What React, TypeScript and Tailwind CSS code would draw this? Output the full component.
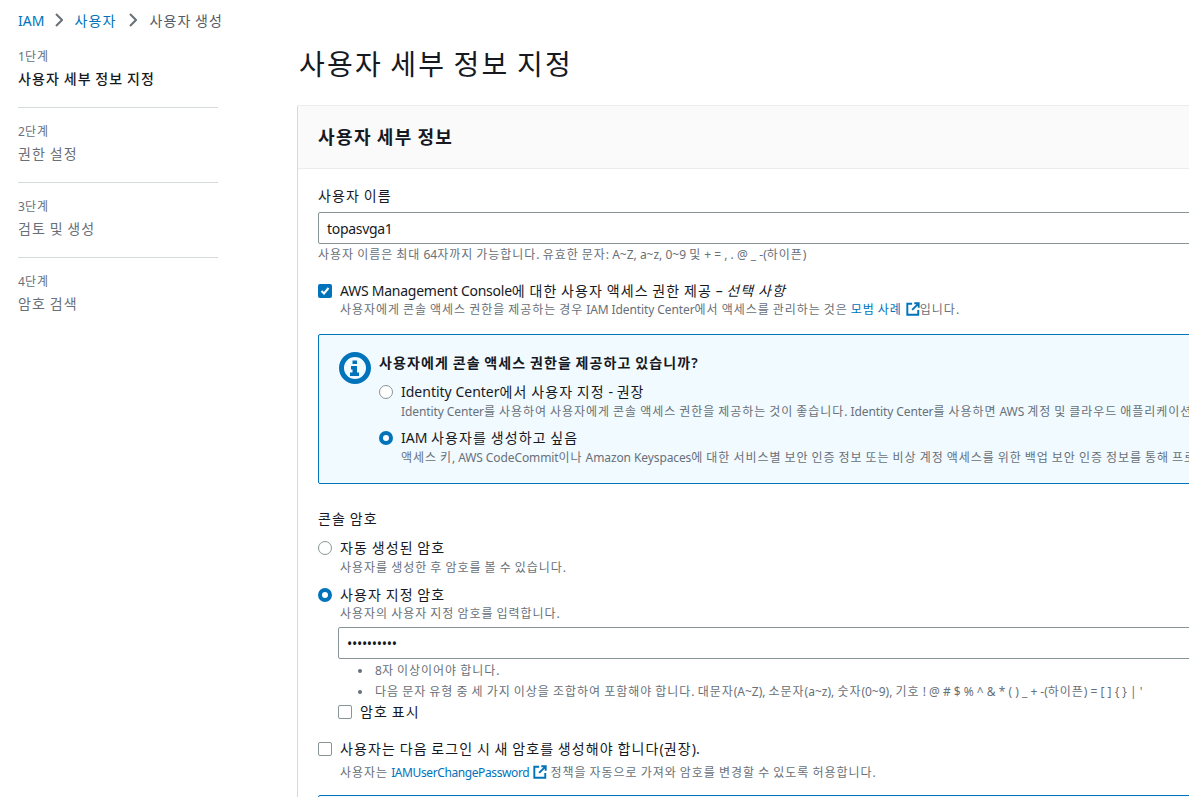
import React from 'react';

const STEPS = [
    { step: '1단계', label: '사용자 세부 정보 지정', active: true },
    { step: '2단계', label: '권한 설정', active: false },
    { step: '3단계', label: '검토 및 생성', active: false },
    { step: '4단계', label: '암호 검색', active: false },
];

const FONT = "font-['Noto_Sans','Noto_Sans_CJK_KR',sans-serif]";

// Hangul in the screenshot sets on a full em, wider than the installed CJK font
const K = ({ t }: { t: string }) => (
    <>
        {t.split(/([\uAC00-\uD7A3]+)/).map((part, i) =>
            i % 2 === 1 ? (
                <span key={i} className="tracking-[0.08em]">
                    {part}
                </span>
            ) : (
                part
            )
        )}
    </>
);

const Crumb = () => (
    <svg width="8" height="14" viewBox="0 0 8 14" fill="none" stroke="#687078" strokeWidth="2" className="mx-[11px] shrink-0">
        <path d="M1 1l6 6-6 6" />
    </svg>
);

const ExternalIcon = () => (
    <svg width="14" height="14" viewBox="0 0 16 16" fill="none" stroke="#0073bb" strokeWidth="2.2" className="inline-block align-[-2px] ml-[1px]">
        <path d="M7 2H1.5v12.5H14V9" />
        <path d="M9.5 1.5h5v5M14.5 1.5 7 9" />
    </svg>
);

const Radio = ({ checked }: { checked?: boolean }) =>
    checked ? (
        <span className="w-[14px] h-[14px] shrink-0 rounded-full bg-white border-[4px] border-[#0073bb]" />
    ) : (
        <span className="w-[14px] h-[14px] shrink-0 rounded-full bg-white border-[1.5px] border-[#879596]" />
    );

const Checkbox = ({ checked }: { checked?: boolean }) =>
    checked ? (
        <span className="w-[14px] h-[14px] shrink-0 rounded-[2px] bg-[#0073bb] flex items-center justify-center">
            <svg width="10" height="10" viewBox="0 0 10 10" fill="none" stroke="white" strokeWidth="2">
                <path d="M1.5 5 4 7.5 8.5 2" />
            </svg>
        </span>
    ) : (
        <span className="w-[14px] h-[14px] shrink-0 rounded-[2px] bg-white border border-[#879596]" />
    );

const InfoIcon = () => (
    <svg width="32" height="32" viewBox="0 0 32 32" className="shrink-0">
        <circle cx="16" cy="16" r="13.5" fill="none" stroke="#0073bb" strokeWidth="5" />
        <rect x="13.5" y="8.5" width="4.5" height="3.5" fill="#0073bb" />
        <path d="M12 14h6v6.5h2V24h-9v-3.5h2.5v-3H12z" fill="#0073bb" />
    </svg>
);

export default function App() {
    return (
        <div className={`w-[1189px] h-[797px] overflow-hidden bg-white text-[#16191f] ${FONT}`}>
            {/* Breadcrumb */}
            <nav className="h-[40px] pl-[18px] flex items-center text-[14px] text-[#545b64]">
                <span className="text-[#0073bb]">IAM</span>
                <Crumb />
                <span className="text-[#0073bb] mr-[2px]"><K t="사용자" /></span>
                <Crumb />
                <span className="ml-[1px]"><K t="사용자 생성" /></span>
            </nav>

            <div className="flex">
                {/* Steps */}
                <aside className="w-[200px] ml-[18px] shrink-0">
                    {STEPS.map((s, i) => (
                        <div
                            key={s.step}
                            className={`pb-[17px] ${i === 0 ? 'pt-[8px]' : 'pt-[15px]'} ${i < 3 ? 'border-b border-[#d5dbdb]' : ''}`}
                        >
                            <div className="text-[12px] leading-[18px] text-[#687078]"><K t={s.step} /></div>
                            <div className={`mt-[2px] text-[14px] leading-[22px] ${s.active ? 'text-[#16191f] font-medium' : 'text-[#687078]'}`}>
                                <K t={s.label} />
                            </div>
                        </div>
                    ))}
                </aside>

                {/* Main */}
                <main className="ml-[79px] w-[1000px] shrink-0">
                    <h1 className="text-[28px] leading-[48px] h-[65px] ml-[2px] font-normal"><K t="사용자 세부 정보 지정" /></h1>

                    <section className="border border-[#eaeded] border-l-[#d5dbdb] rounded-[2px]">
                        <header className="h-[63px] px-[20px] flex items-center bg-[#fafafa] border-b border-[#eaeded]">
                            <h2 className="text-[18px] font-semibold"><K t="사용자 세부 정보" /></h2>
                        </header>

                        <div className="px-[20px] pt-[16px]">
                            <div className="text-[14px] leading-[22px]"><K t="사용자 이름" /></div>
                            <div className="mt-[5px] h-[32px] px-[8px] flex items-center text-[14px] tracking-[-0.3px] border border-[#879596] rounded-[2px]">
                                topasvga1
                            </div>
                            <p className="mt-[2px] text-[12px] leading-[18px] text-[#687078]">
                                <K t="사용자 이름은 최대 64자까지 가능합니다. 유효한 문자: A~Z, a~z, 0~9 및 + = , . @ _ -(하이픈)" />
                            </p>

                            <div className="mt-[17px] flex items-center gap-[8px] text-[14px] leading-[20px]">
                                <Checkbox checked />
                                <span>
                                    <span className="tracking-[-0.25px]">AWS Management Console</span>
                                    <K t="에 대한 사용자 액세스 권한 제공 – " />
                                    <i><K t="선택 사항" /></i>
                                </span>
                            </div>
                            <p className="ml-[22px] text-[12px] leading-[18px] text-[#687078] tracking-[-0.1px]">
                                <K t="사용자에게 콘솔 액세스 권한을 제공하는 경우 IAM Identity Center에서 액세스를 관리하는 것은 " />
                                <span className="text-[#0073bb]"><K t="모범 사례" /></span> <ExternalIcon /><K t="입니다." />
                            </p>

                            {/* Info box */}
                            <div className="mt-[15px] h-[150px] pl-[20px] pt-[17px] flex gap-[8px] bg-[#f1faff] border border-[#0073bb] rounded-[2px] overflow-hidden">
                                <InfoIcon />
                                <div className="min-w-0 whitespace-nowrap">
                                    <div className="text-[14px] leading-[22px] font-semibold"><K t="사용자에게 콘솔 액세스 권한을 제공하고 있습니까?" /></div>
                                    <div className="mt-[8px] flex items-center gap-[8px] text-[14px] leading-[20px]">
                                        <Radio />
                                        <span><K t="Identity Center에서 사용자 지정 - 권장" /></span>
                                    </div>
                                    <p className="ml-[22px] mt-[1px] text-[12px] leading-[18px] text-[#687078] tracking-[-0.1px]">
                                        <K t="Identity Center를 사용하여 사용자에게 콘솔 액세스 권한을 제공하는 것이 좋습니다. Identity Center를 사용하면 AWS 계정 및 클라우드 애플리케이션에 대한 액세스를 관리할 수 있습니다." />
                                    </p>
                                    <div className="mt-[7px] flex items-center gap-[8px] text-[14px] leading-[20px]">
                                        <Radio checked />
                                        <span><K t="IAM 사용자를 생성하고 싶음" /></span>
                                    </div>
                                    <p className="ml-[22px] mt-[1px] text-[12px] leading-[18px] text-[#687078] tracking-[-0.1px]">
                                        <K t="액세스 키, AWS CodeCommit이나 Amazon Keyspaces에 대한 서비스별 보안 인증 정보 또는 비상 계정 액세스를 위한 백업 보안 인증 정보를 통해 프로그래밍 방식 액세스를 활성화해야 하는 경우에만 권장합니다." />
                                    </p>
                                </div>
                            </div>

                            {/* Console password */}
                            <div className="mt-[24px] text-[14px] leading-[22px]"><K t="콘솔 암호" /></div>
                            <div className="mt-[8px] flex items-center gap-[8px] text-[14px] leading-[20px]">
                                <Radio />
                                <span><K t="자동 생성된 암호" /></span>
                            </div>
                            <p className="ml-[22px] mt-[1px] text-[12px] leading-[18px] text-[#687078]"><K t="사용자를 생성한 후 암호를 볼 수 있습니다." /></p>
                            <div className="mt-[8px] flex items-center gap-[8px] text-[14px] leading-[20px]">
                                <Radio checked />
                                <span><K t="사용자 지정 암호" /></span>
                            </div>
                            <p className="ml-[22px] text-[12px] leading-[18px] text-[#687078]"><K t="사용자의 사용자 지정 암호를 입력합니다." /></p>

                            <div className="ml-[20px] mt-[4px] h-[32px] px-[8px] flex items-center text-[14px] tracking-[-0.3px] border border-[#879596] rounded-[2px]">
                                ••••••••••
                            </div>
                            <ul className="ml-[40px] mt-[1px] text-[12px] leading-[21px] text-[#687078]">
                                <li className="flex">
                                    <span className="mt-[9px] mr-[13px] w-[4px] h-[4px] shrink-0 rounded-full bg-[#687078]" />
                                    <span><K t="8자 이상이어야 합니다." /></span>
                                </li>
                                <li className="flex">
                                    <span className="mt-[9px] mr-[13px] w-[4px] h-[4px] shrink-0 rounded-full bg-[#687078]" />
                                    <span>
                                        <K t="다음 문자 유형 중 세 가지 이상을 조합하여 포함해야 합니다. 대문자(A~Z), 소문자(a~z), 숫자(0~9), 기호 ! @ # $ % ^ & * ( ) _ + -(하이픈) = [ ] { } | '" />
                                    </span>
                                </li>
                            </ul>
                            <div className="ml-[20px] flex items-center gap-[8px] text-[14px] leading-[20px]">
                                <Checkbox />
                                <span><K t="암호 표시" /></span>
                            </div>

                            <div className="mt-[16px] flex items-center gap-[8px] text-[14px] leading-[22px]">
                                <Checkbox />
                                <span><K t="사용자는 다음 로그인 시 새 암호를 생성해야 합니다(권장)." /></span>
                            </div>
                            <p className="ml-[22px] mt-[4px] text-[12px] leading-[18px] text-[#687078]">
                                <K t="사용자는 " />
                                <span className="text-[#0073bb] tracking-[-0.4px]">IAMUserChangePassword</span> <ExternalIcon />{' '}
                                <K t="정책을 자동으로 가져와 암호를 변경할 수 있도록 허용합니다." />
                            </p>

                            <div className="mt-[13px] h-[60px] bg-[#f1faff] border border-[#0073bb] rounded-[2px]" />
                        </div>
                    </section>
                </main>
            </div>
        </div>
    );
}
